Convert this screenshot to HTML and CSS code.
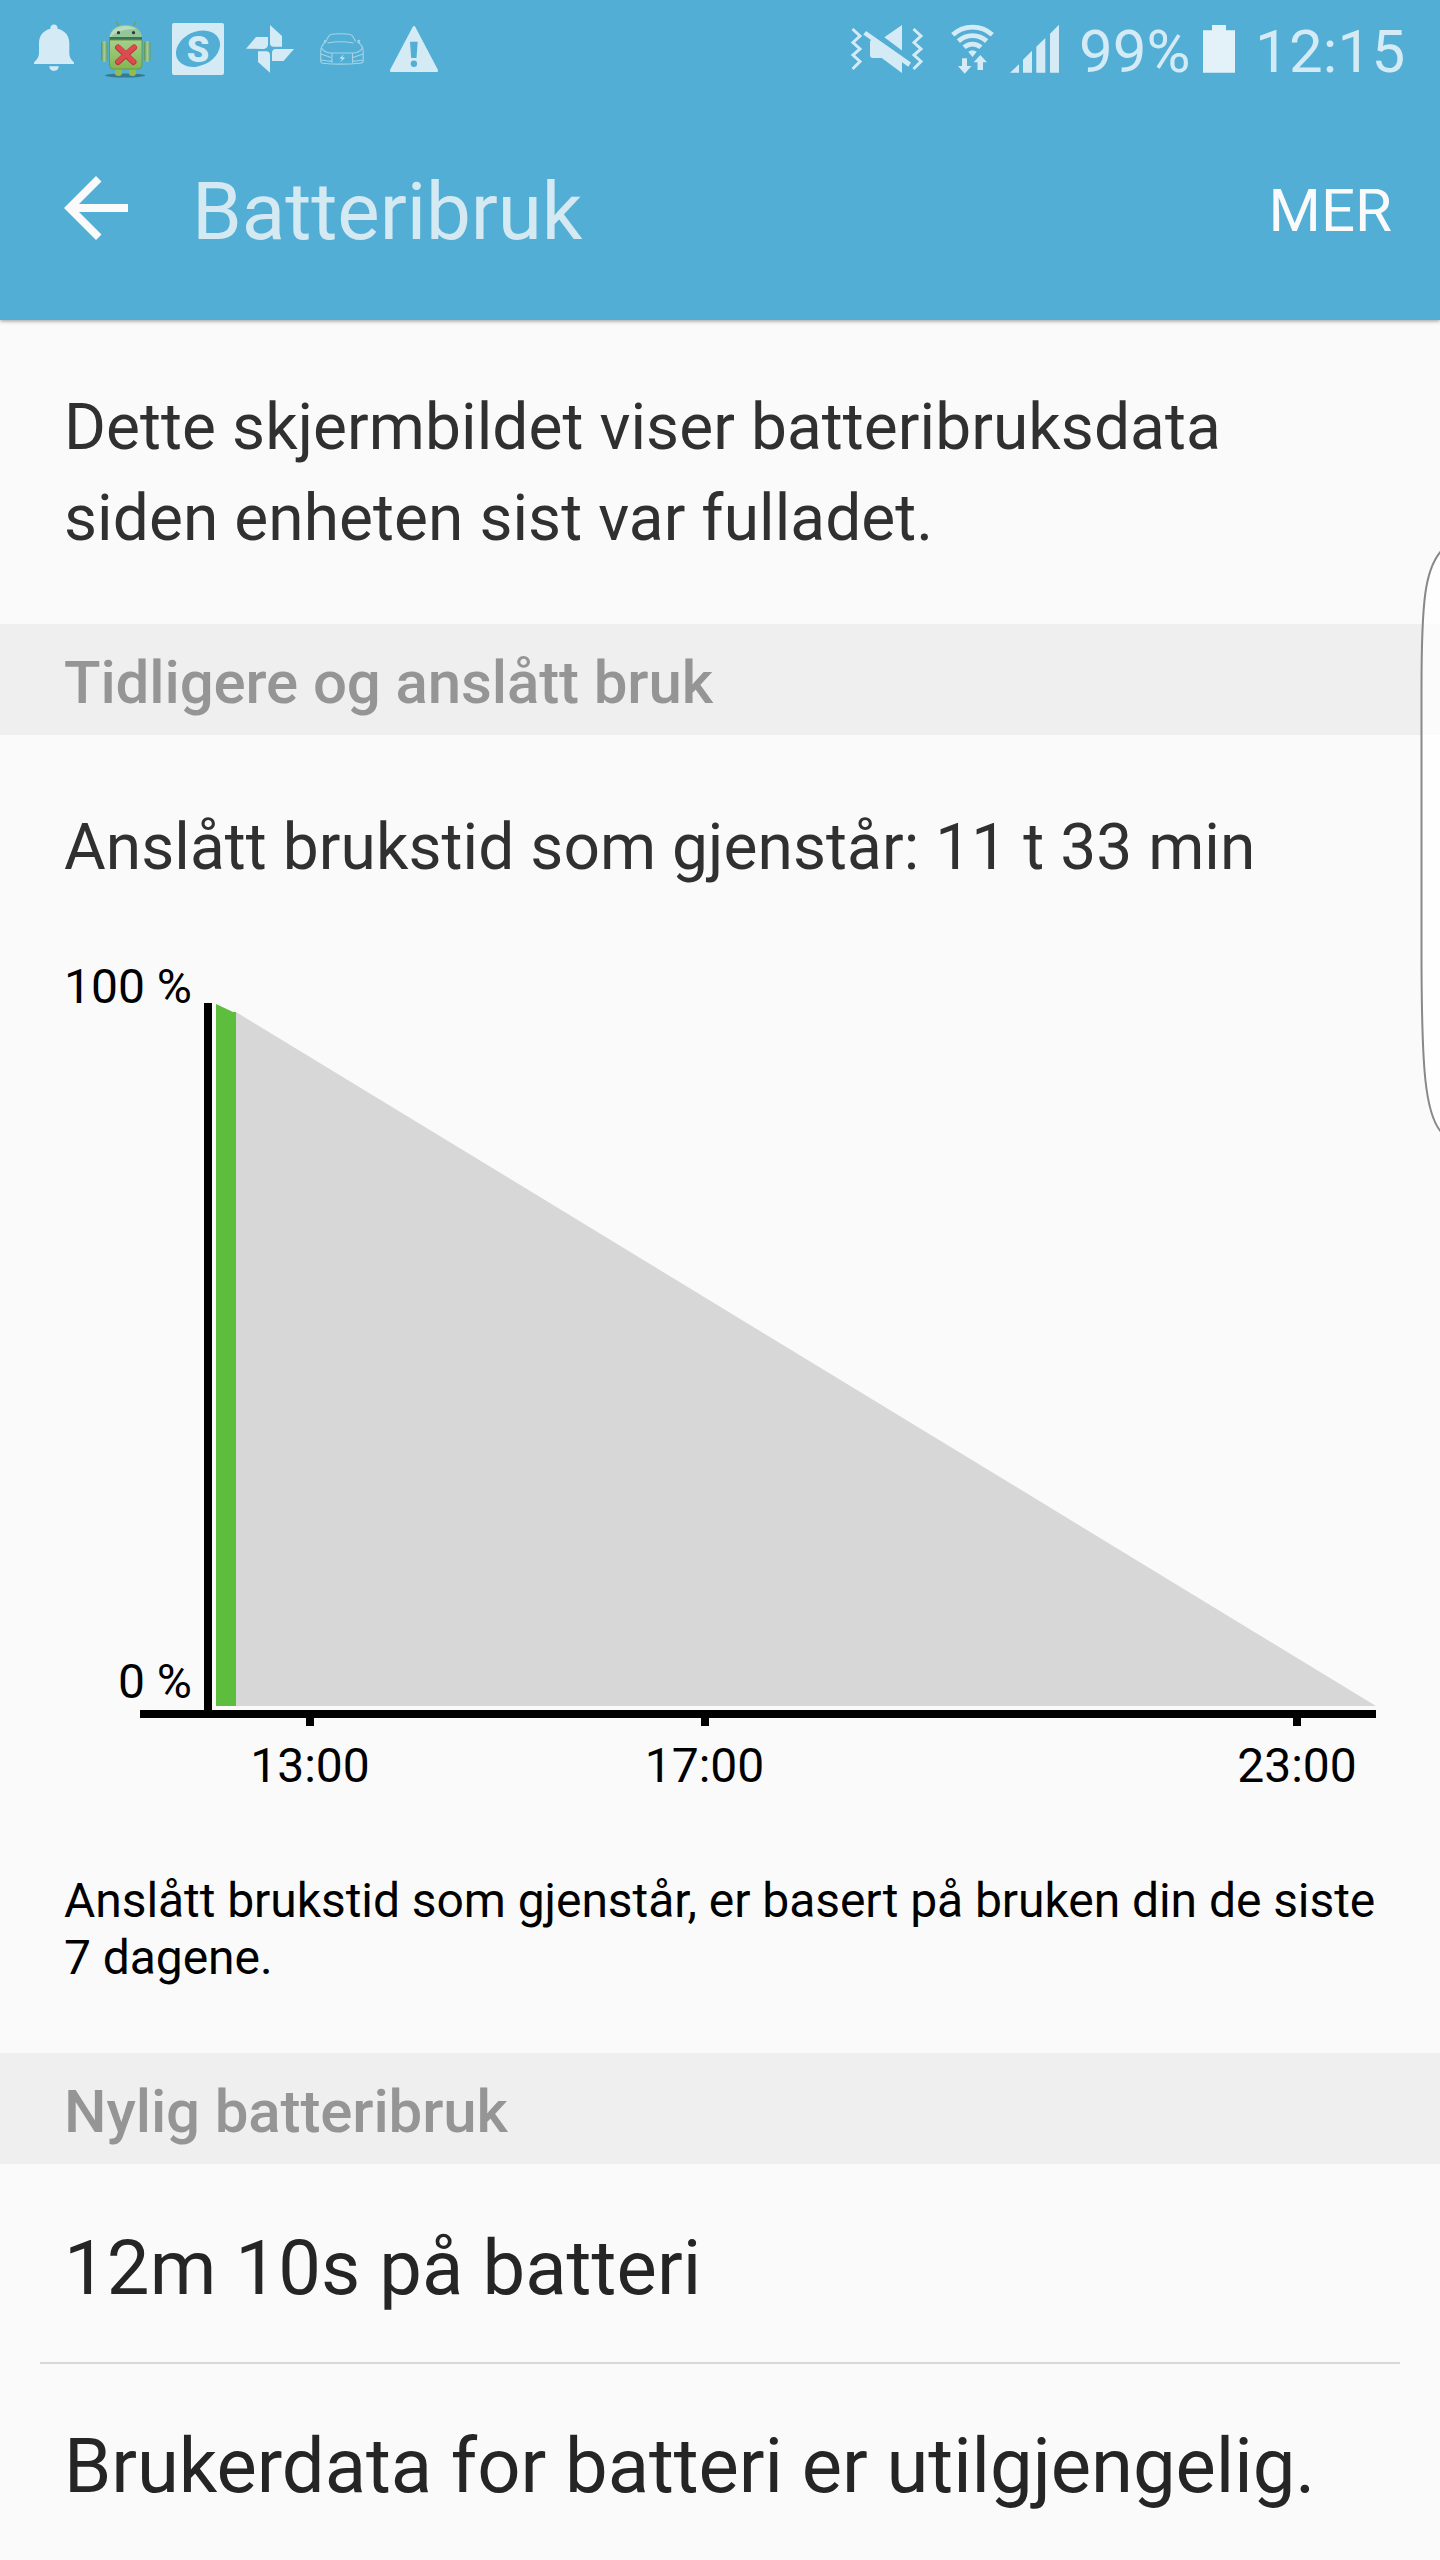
FILE: index.html
```html
<!DOCTYPE html>
<html lang="no">
<head>
  <meta charset="UTF-8" />
  <meta name="viewport" content="width=device-width, initial-scale=1.0">
  <title>Batteribruk</title>
  <link rel="stylesheet" href="styles.css">
</head>
<body>

  <header class="header">
    <div class="statusbar">
      <div class="notifications">
        <svg viewBox="28 0 52 100" class="icon">
          <path d="M54 24.500a3.600 3.600 0 0 1 3.600 4.200C65 30.300 69.300 36 69.300 43v9c0 5 1 6.500 4.700 10.500V64H34v-1.500c3.700-4 5-5.500 5-10.500v-9c0-7 4.200-12.700 11.400-14.300A3.600 3.600 0 0 1 54 24.500zM49.300 66.300h9.400c0 6.200-9.400 6.200-9.400 0z"/>
        </svg>
        <svg viewBox="100 0 52 100">
          <defs>
            <linearGradient id="body" x1="0" x2="0" y1="0" y2="1">
              <stop offset="0" stop-color="#a5d08a"/>
              <stop offset="1" stop-color="#82b750"/>
            </linearGradient>
            <linearGradient id="arm" x1="0" x2="1" y1="0" y2="0">
              <stop offset="0" stop-color="#5a8f55"/>
              <stop offset="0.500" stop-color="#a3d0a0"/>
              <stop offset="1" stop-color="#67995e"/>
            </linearGradient>
          </defs>
          <ellipse cx="125" cy="75.500" rx="20" ry="2" fill="#2f6174" opacity="0.700"/>
          <path d="M116 21.500l3 5M136 21.500l-3 5" stroke="#68a866" stroke-width="1.500"/>
          <rect x="115" y="66" width="7" height="10" rx="3" fill="#91bd4d"/>
          <rect x="129" y="66" width="7" height="10" rx="3" fill="#91bd4d"/>
          <rect x="101" y="41" width="6.500" height="21" rx="3" fill="url(#arm)"/>
          <rect x="144" y="41" width="6.500" height="21" rx="3" fill="url(#arm)"/>
          <path d="M109.500 38c0-17.500 32.500-17.500 32.500 0z" fill="#93c798"/>
          <path d="M109.500 38c1-4 3-8 6-9.500 7-4 17-3 21 1-9-1-20 1-27 8.500z" fill="#b7dcc0"/>
          <rect x="109.500" y="37" width="32.500" height="3" fill="#3c7357"/>
          <path d="M109.500 40h32.500v25q0 4-4 4h-24.500q-4 0-4-4z" fill="url(#body)" stroke="#679b4c"/>
          <circle cx="118.500" cy="32.700" r="1.600" fill="#243b42"/>
          <circle cx="133.500" cy="32.700" r="1.600" fill="#243b42"/>
          <path d="M118 47.500l15.500 14.500M134 47.500L118 62" stroke="#b63a42" stroke-width="6" stroke-linecap="round"/>
          <path d="M118 47l15.500 14.500M134 47L118 61.500" stroke="#dd4a50" stroke-width="4.500" stroke-linecap="round"/>
        </svg>
        <svg viewBox="172 0 52 100" class="icon">
          <rect x="172" y="23" width="52" height="52" rx="2"/>
          <ellipse cx="198" cy="48.700" rx="23" ry="17" transform="rotate(-25 198 48.700)" class="cut"/>
          <text x="198" y="61.700" class="badge-letter">S</text>
        </svg>
        <svg viewBox="244 0 52 100" class="icon">
          <path d="M270 25l12 11v10.700h-8.500q-3 0-3.500-3zM246 48.700L256 37h12v7q0 4.700-4.500 5zM258 51.300h8q4 0 4 4v17.400L258 62zM294 49l-10.500 12H272v-8q0-4 4-4z"/>
        </svg>
        <svg viewBox="316 0 52 100" class="car">
          <path d="M326 41.500c2-5 3-7 5.500-7.300 4-.7 14-.7 18 0 2.500.3 4 2.300 6 7.300M327.500 43c8-1.500 18-1.500 26 0M326 41.500c-4 3-5.500 6-5.300 11v9q0 1.500 2 1.700c11 1.200 25 1.200 37 0q3.500 0 3.500-3v-9c0-4-2-7-6-9.700M324.500 43.500c-1-3 .5-3.500 2-2.500M358.500 43.500c2.500-2.500 1-4-1-2.500M321.500 48c2 3 5 5 10 5h21c5 0 8-2 10-5M332 53v10M352.500 53v10M321 54l10 3.500M363 54l-10 3.500M321 60c4 .5 7 1.500 11 1M363 60c-4 .5-7 1.500-11 1"/>
          <path d="M344 54l-4.500 4.500h3l-2.500 4 5-5h-3z" class="bolt"/>
        </svg>
        <svg viewBox="388 0 52 100" class="icon">
          <path d="M414 26q.8 0 1.200.8L438 70q.6 1.900-1.200 2h-45.600q-1.800-.1-1.200-2l22.800-43.200q.4-.8 1.200-.8z"/>
          <path d="M410 41.700h7.700l-1.200 16.300h-5.300z" class="cut"/>
          <circle cx="413.900" cy="63.800" r="3.200" class="cut"/>
        </svg>
      </div>

      <div class="system">
        <svg viewBox="848 0 78 100" class="icon mute">
          <path d="M852.500 29l7.500 7-7 6.500 7 6.500-7 6 7 6.500-7.500 7.500M913.500 29l7.500 7-7 6.500 7 6.500-7 6 7 6.500-7.500 7.500" class="shake"/>
          <path d="M866 31l45 31.500-2.700 4.200-45-32.200zM902 25v25.500l-17.700-13.200zM870 41l2-1.500L902 61v12l-20.300-15H873q-3 0-3-3z"/>
        </svg>
        <svg viewBox="950 0 46 100" class="icon wifi">
          <path d="M952.700 34.800a29.500 29.500 0 0 1 39.600 0M958.400 41.100a21 21 0 0 1 28.200 0M964.100 47.300a12.600 12.600 0 0 1 16.800 0" class="waves"/>
          <path d="M972.500 57l-4.300-5.200a7 7 0 0 1 8.600 0zM962 58.300h5V66h4.500l-6.800 7.700-6.700-7.700h4zM980.300 55l6.700 7.300h-4V70h-5.500v-7.700h-3.800z"/>
        </svg>
        <svg viewBox="1008 0 52 100" class="icon signal">
          <path d="M1010 72.700h9v-8.400zM1023 72.700h9v-22l-9 9zM1036.300 72.700h9V38l-9 8.700zM1050 72.700h9v-48l-9 9z"/>
        </svg>
        <span class="percent">99%</span>
        <svg viewBox="1203 0 32 100" class="battery">
          <path d="M1203 72.700V30.300h9V25h14v5.300h9v42.400z"/>
        </svg>
        <span class="clock">12:15</span>
      </div>
    </div>

    <div class="toolbar">
      <svg viewBox="0 0 64 64" class="back">
        <path d="M32 0l5.500 5.500L15 28h49v8H15l22.500 22.500L32 64 0 32z"/>
      </svg>
      <h1>Batteribruk</h1>
      <a class="more">MER</a>
    </div>
  </header>

  <main>
    <p class="intro">Dette skjermbildet viser batteribruksdata<br>siden enheten sist var fulladet.</p>

    <h2>Tidligere og anslått bruk</h2>
    <p class="remaining">Anslått brukstid som gjenstår: 11 t 33 min</p>

    <svg class="chart" viewBox="0 893 1440 920">
      <!-- estimated and used battery -->
      <path d="M236 1012L1376 1706H236z" fill="#d7d7d7"/>
      <path d="M216 1004l17 8h3v694h-20z" fill="#5dbd3d"/>
      <!-- axes -->
      <path d="M204 1003h8v707h1164v8H140v-8h64z"/>
      <path d="M306 1718h8v8h-8zM701 1718h8v8h-8zM1293 1718h8v8h-8z"/>
      <text x="192" y="1003" class="end">100 %</text>
      <text x="192" y="1698" class="end">0 %</text>
      <text x="310" y="1782" class="mid">13:00</text>
      <text x="704.500" y="1782" class="mid">17:00</text>
      <text x="1297" y="1782" class="mid">23:00</text>
    </svg>

    <p class="note">Anslått brukstid som gjenstår, er basert på bruken din de siste<br>7 dagene.</p>

    <h2>Nylig batteribruk</h2>
    <ul class="list">
      <li>12m 10s på batteri</li>
      <li>Brukerdata for batteri er utilgjengelig.</li>
    </ul>
  </main>

  <svg class="edge" viewBox="1420 545 20 595">
    <path d="M1442 550C1425 568 1421.500 600 1421.500 690V950C1421.500 1070 1425 1115 1442 1133"/>
  </svg>

</body>
</html>
```
FILE: styles.css
```css
* {
  box-sizing: border-box;
}
body {
  margin: 0;
  height: 2560px;
  overflow: hidden;
  position: relative;
  font-family: Roboto, sans-serif;
  background: #fafafa;
  color: #303030;
}
svg {
  display: block;
  flex: none;
}

.header {
  height: 320px;
  background: #52aed5;
  box-shadow: 0 1px 4px rgba(0,0,0,0.4);
}
.statusbar {
  height: 100px;
  padding: 0 35px 0 28px;
  display: flex;
  justify-content: space-between;
}
.notifications {
  display: flex;
  gap: 20px;
}
.notifications svg {
  width: 52px;
  height: 100px;
}
.system {
  display: flex;
  font-size: 60px;
  line-height: 103px;
  color: #d4ebf5;
}
.system svg {
  height: 100px;
}
.icon {
  fill: #d4ebf5;
}
.cut {
  fill: #52aed5;
}
.badge-letter {
  font-size: 36px;
  font-weight: 900;
  text-anchor: middle;
}
.car {
  fill: none;
  stroke: #a3d4e8;
  stroke-width: 1.1;
}
.car .bolt {
  fill: #d4ebf5;
  stroke: none;
}
.mute {
  width: 78px;
  margin-right: 24px;
}
.shake {
  fill: none;
  stroke: #d4ebf5;
  stroke-width: 3;
}
.wifi {
  width: 46px;
  margin-right: 12px;
}
.waves {
  fill: none;
  stroke: #d4ebf5;
  stroke-width: 4.8;
}
.signal {
  width: 52px;
  margin-right: 19px;
}
.percent {
  width: 124px;
}
.battery {
  width: 32px;
  fill: #e3f2f8;
}
.clock {
  width: 150px;
  margin-left: 20px;
  letter-spacing: 0.2px;
}

.toolbar {
  height: 220px;
  padding: 0 48px 0 64px;
  display: flex;
  align-items: center;
}
.back {
  width: 64px;
  height: 64px;
  margin-bottom: 4px;
  fill: #fafafa;
}
h1 {
  margin: 0 auto 0 64px;
  padding-top: 3px;
  font-size: 80px;
  font-weight: 400;
  letter-spacing: -0.1px;
  color: #d4e9f2;
}
.more {
  font-size: 60px;
  color: #fafafa;
}

p {
  margin: 0;
}
.intro {
  padding: 62px 64px 60px;
  font-size: 64px;
  line-height: 91px;
  letter-spacing: 0.07px;
}
h2 {
  margin: 0;
  height: 111px;
  padding: 6px 64px 0;
  background: #efefef;
  color: #959595;
  font-size: 60px;
  font-weight: 500;
  line-height: 105px;
  letter-spacing: -0.12px;
}
.remaining {
  padding: 67px 64px 0;
  font-size: 64px;
  line-height: 91px;
  letter-spacing: 0.07px;
}
.chart {
  width: 1440px;
  height: 920px;
  font-size: 48px;
  fill: #000;
}
.end {
  text-anchor: end;
}
.mid {
  text-anchor: middle;
}
.note {
  padding: 59px 60px 67px 64px;
  font-size: 48px;
  line-height: 57px;
  letter-spacing: -0.06px;
  color: #000;
  white-space: nowrap;
}

.list {
  margin: 0 40px;
  padding: 0;
  list-style: none;
  font-size: 76px;
  line-height: 90px;
  color: #252525;
}
.list li {
  padding: 59px 24px 49px;
  letter-spacing: 0.1px;
  white-space: nowrap;
}
.list li + li {
  padding-top: 57px;
  letter-spacing: -0.05px;
  border-top: 2px solid #d8d8d8;
}

.edge {
  position: absolute;
  top: 545px;
  right: 0;
  width: 20px;
  height: 595px;
  fill: rgba(255,255,255,0.75);
  stroke: #888;
  stroke-width: 2;
}
```
